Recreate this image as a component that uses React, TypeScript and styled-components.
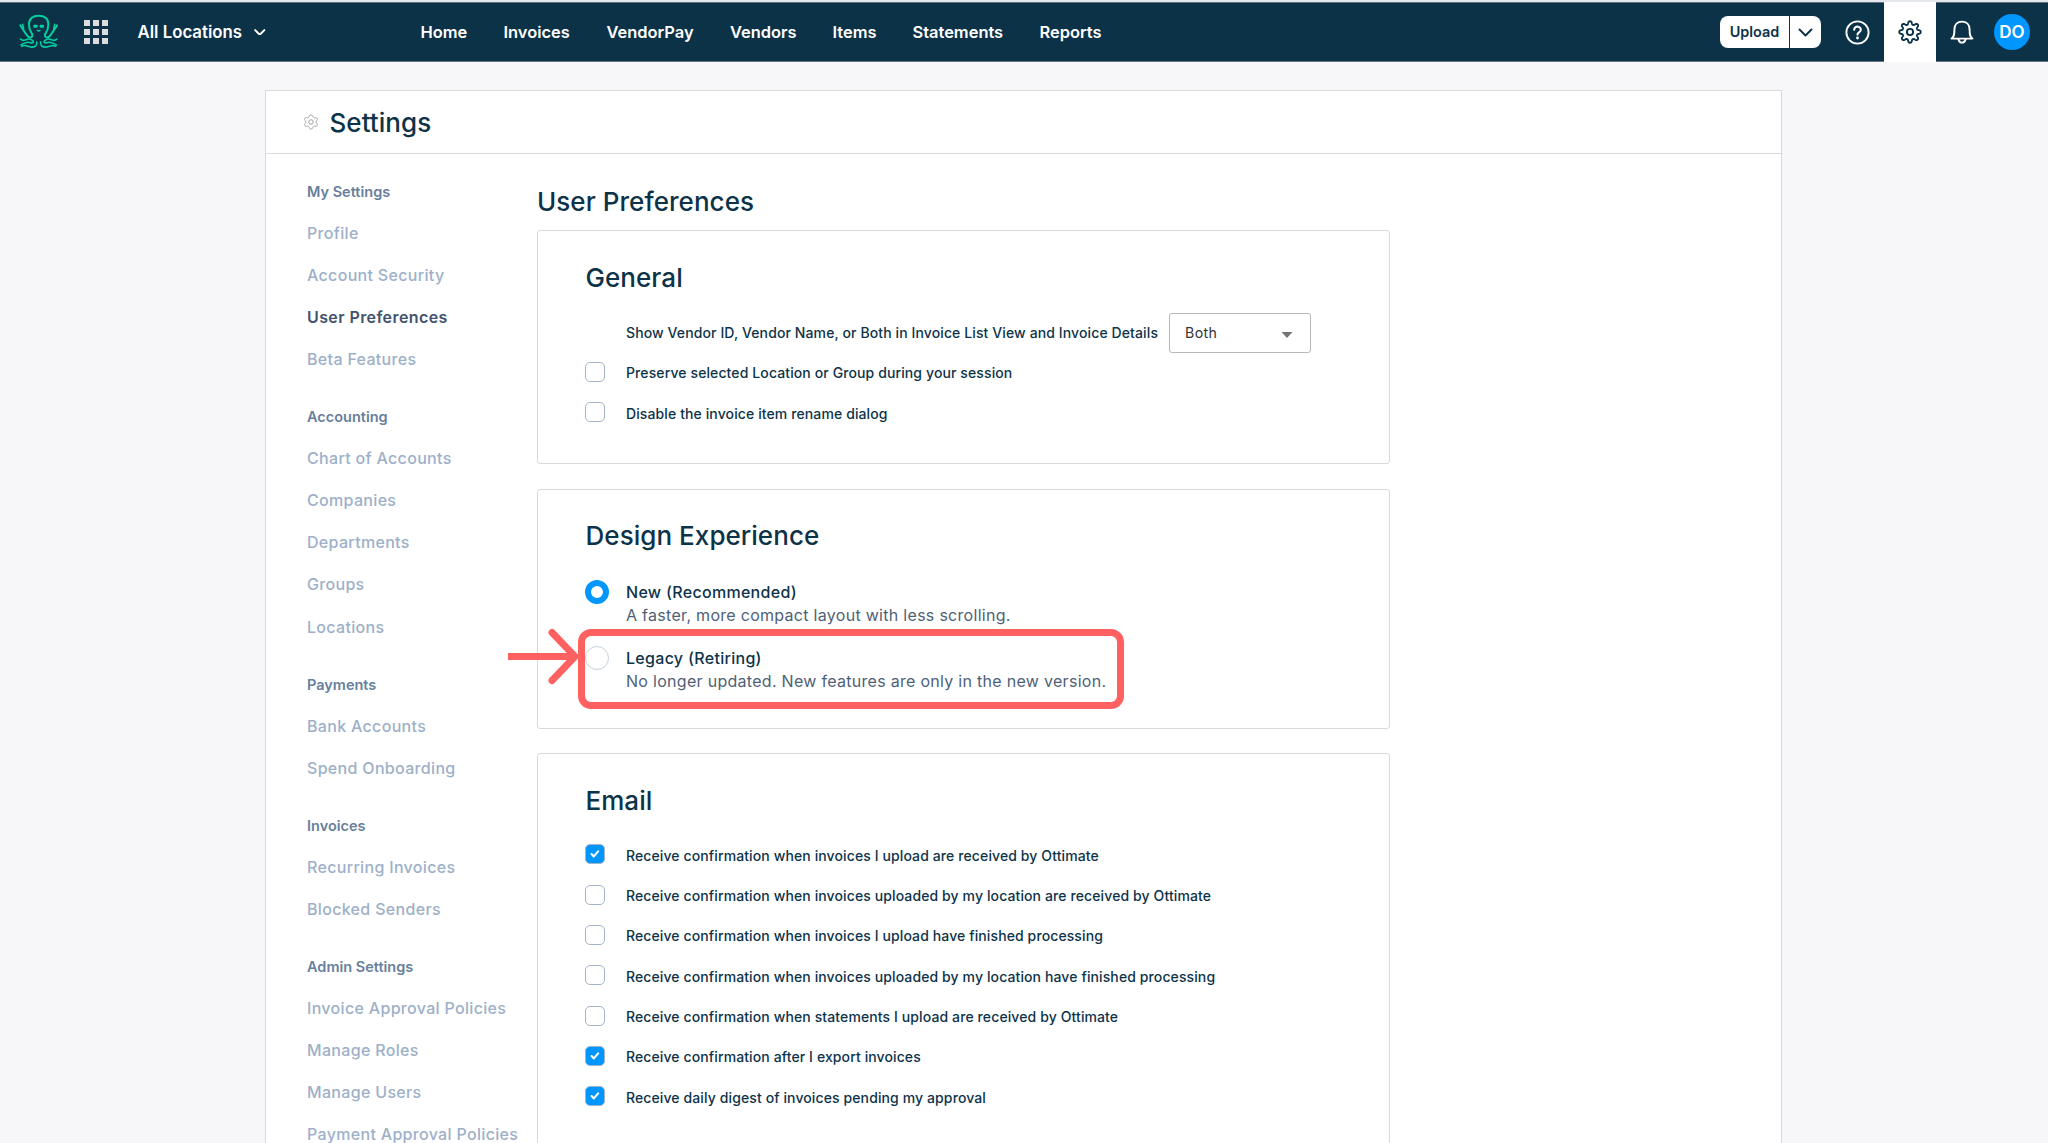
import React from "react";
import styled, { createGlobalStyle } from "styled-components";

const GlobalStyle = createGlobalStyle`
  * { box-sizing: border-box; }
  body {
    margin: 0;
    background: #f7f7fa;
    font-family: Inter, "Liberation Sans", sans-serif;
    color: #0d3349;
  }
`;

const Page = styled.div`
  height: 1143px;
  overflow: hidden;
  background: #f7f7fa;
  border-top: 2px solid #e4e8ec;
`;

const TopBar = styled.header`
  display: flex;
  height: 60px;
  background: #0c3248;
  border-top: 1px solid #5f7383;
  border-bottom: 1px solid #6a7387;
  color: #fff;
`;

const BarLeft = styled.div`
  display: flex;
  align-items: center;
  width: 420.5px;
  padding-left: 19px;
`;

const AppGrid = styled.div`
  display: grid;
  grid-template-columns: repeat(3, 6px);
  gap: 3px;
  margin: 0 29.5px 0 25px;
`;

const GridDot = styled.span`
  height: 6px;
  background: #dcdcdf;
`;

const LocationLabel = styled.span`
  font-size: 16.8px;
  font-weight: 600;
  margin-right: 12px;
`;

const Menu = styled.nav`
  display: flex;
  flex: 1;
  align-items: center;
  gap: 36px;
`;

const MenuLink = styled.a<{ $w: number }>`
  width: ${(p) => p.$w}px;
  font-size: 16.45px;
  font-weight: 600;
  white-space: nowrap;
`;

const BarRight = styled.div`
  display: flex;
  align-items: center;
`;

const UploadGroup = styled.div`
  display: flex;
  width: 101px;
  height: 32px;
  margin-right: 24px;
  border-radius: 8px;
  overflow: hidden;
  color: #0c3248;
`;

const UploadButton = styled.div`
  display: flex;
  align-items: center;
  justify-content: center;
  width: 69px;
  padding-bottom: 1px;
  background: #fff;
  font-size: 14.4px;
  font-weight: 600;
  margin-right: 1px;
`;

const UploadMore = styled.div`
  display: flex;
  flex: 1;
  align-items: center;
  justify-content: center;
  background: #fff;
`;

const SettingsTab = styled.div`
  display: flex;
  align-items: center;
  justify-content: center;
  width: 52px;
  height: 60px;
  margin: 0 14px 0 14px;
  background: #fff;
  color: #0c3248;
`;

const Avatar = styled.div`
  display: flex;
  align-items: center;
  justify-content: center;
  width: 36px;
  height: 36px;
  margin: 0 18px 0 20px;
  border-radius: 50%;
  background: #0096ff;
  font-size: 17px;
  font-weight: 600;
`;

const Panel = styled.section`
  width: 1517px;
  height: 1100px;
  margin: 28px 0 0 265px;
  background: #fff;
  border: 1px solid #d9dadc;
`;

const PanelHeader = styled.div`
  display: flex;
  align-items: center;
  gap: 11px;
  height: 63px;
  padding-left: 36.5px;
  border-bottom: 1px solid #d9dadc;
`;

const Heading = styled.h2<{ $shift?: number }>`
  margin: 0;
  padding-top: ${(p) => p.$shift ?? 0}px;
  font-size: 26px;
  font-weight: 500;
  line-height: 34px;
  letter-spacing: 0.05px;
`;

const PanelBody = styled.div`
  display: flex;
`;

const SideNav = styled.nav`
  width: 271px;
  padding: 19.1px 0 0 41px;
`;

const SideGroup = styled.div`
  margin-bottom: 18.3px;
`;

const SideTitle = styled.div`
  font-size: 14.5px;
  font-weight: 600;
  line-height: 38.6px;
  color: #67809b;
`;

const SideLink = styled.a<{ $active?: boolean }>`
  display: block;
  font-size: 16px;
  line-height: 42.12px;
  letter-spacing: ${(p) => (p.$active ? 0.4 : 0.32)}px;
  white-space: nowrap;
  font-weight: ${(p) => (p.$active ? 600 : 500)};
  color: ${(p) => (p.$active ? "#42526e" : "#9db0c8")};
`;

const Main = styled.main`
  width: 853px;
  padding-top: 30.5px;
`;

const Card = styled.div<{ $h: number; $top: number }>`
  height: ${(p) => p.$h}px;
  padding: ${(p) => p.$top}px 47px 0;
  margin-bottom: 24.5px;
  border: 1px solid #d9dadc;
  border-radius: 3px;

  ${Heading} {
    margin-left: 0.5px;
  }
`;

const TitleWrap = styled.div`
  margin-bottom: 11.5px;
`;

const PrefList = styled.div`
  margin-top: 17.4px;
`;

const PrefRow = styled.label`
  display: flex;
  align-items: center;
  height: 40.35px;
`;

const Box = styled.span<{ $on?: boolean; $hidden?: boolean }>`
  display: flex;
  align-items: center;
  justify-content: center;
  width: 20px;
  height: 20px;
  margin: 0 21px 2px 0;
  border: 1.5px solid #a3b5cb;
  border-radius: 5px;
  background: ${(p) => (p.$on ? "#0096ff" : "#fff")};
  visibility: ${(p) => (p.$hidden ? "hidden" : "visible")};
`;

const PrefText = styled.span`
  font-size: 14px;
  font-weight: 500;
  letter-spacing: 0.11px;
  white-space: nowrap;
`;

const Select = styled.div`
  display: flex;
  align-items: center;
  justify-content: space-between;
  width: 142px;
  height: 40px;
  margin-left: 11px;
  padding: 0 17px 0 15px;
  border: 1px solid #b9b9bb;
  border-radius: 3px;
  color: #333;
  font-size: 14.2px;
  letter-spacing: 0.3px;
`;

const Caret = styled.svg`
  margin-top: 4px;
`;

const RadioList = styled.div`
  display: flex;
  flex-direction: column;
  gap: 20px;
  margin-top: 28px;
`;

const RadioRow = styled.label`
  position: relative;
  display: flex;
  gap: 17px;
`;

const Radio = styled.span<{ $on?: boolean }>`
  width: 24px;
  height: 24px;
  margin-top: -1px;
  border-radius: 50%;
  background: #fff;
  border: ${(p) => (p.$on ? "6px solid #0096ff" : "1px solid #c6d2e0")};
`;

const RadioTitle = styled.div`
  font-size: 16px;
  font-weight: 500;
  line-height: 23px;
  letter-spacing: 0.3px;
`;

const RadioNote = styled.div`
  font-size: 16px;
  line-height: 23px;
  letter-spacing: 0.29px;
  color: #4f5f78;
  white-space: nowrap;
`;

const Highlight = styled.div`
  position: absolute;
  left: -7px;
  top: -17.5px;
  width: 546px;
  height: 80px;
  border: 7px solid #ff6161;
  border-radius: 13px;
`;

const Pointer = styled.svg`
  position: absolute;
  left: -77px;
  top: -18.5px;
`;

function Octopus() {
  return (
    <svg width="40" height="36" viewBox="17 18 118 108" fill="none" stroke="#04cf9e" strokeWidth="6" strokeLinecap="round" strokeLinejoin="round">
      <path d="M20 52 L37 78 Q46 92 54 87 Q59 82 53 74 Q46 64 46 49 C46 32 58 23 75 23 C92 23 104 32 104 49 Q104 64 97 74 Q91 82 96 87 Q104 92 113 78 L130 52" />
      <path d="M27 49 L30 62 M123 49 L120 62" strokeWidth="4.5" />
      <path d="M20 93 Q28 100 37 95 Q48 90 57 98 Q62 103 54 105 Q44 101 36 104 Q29 106 22 111" strokeWidth="4.8" />
      <path d="M130 93 Q122 100 113 95 Q102 90 93 98 Q88 103 96 105 Q106 101 114 104 Q121 106 128 111" strokeWidth="4.8" />
      <path d="M24 115 Q33 110 42 115 Q56 120 66 114 Q71 109 69 102" strokeWidth="4.8" />
      <path d="M126 115 Q117 110 108 115 Q94 120 84 114 Q79 109 81 102" strokeWidth="4.8" />
      <rect x="59" y="50" width="13" height="9" rx="3" fill="#04cf9e" stroke="none" />
      <rect x="78" y="50" width="13" height="9" rx="3" fill="#04cf9e" stroke="none" />
      <path d="M71 67 Q75 71 79 67" strokeWidth="4" />
    </svg>
  );
}

function gearPath(teeth: number, mid: number, amp: number, sharp: number, phase: number) {
  const pts: string[] = [];
  const n = 240;
  for (let i = 0; i < n; i++) {
    const a = (i / n) * Math.PI * 2;
    const wave = Math.tanh(sharp * Math.cos(teeth * (a - phase))) / Math.tanh(sharp);
    const r = mid + amp * wave;
    pts.push(`${(12 + r * Math.cos(a)).toFixed(2)} ${(12 + r * Math.sin(a)).toFixed(2)}`);
  }
  return `M${pts.join("L")}Z`;
}

function Gear() {
  return (
    <svg width="24" height="24" viewBox="0 0 24 24" fill="none" stroke="currentColor" strokeWidth="1.9" strokeLinejoin="round">
      <path d={gearPath(8, 9.2, 1.5, 1.5, 0)} />
      <circle cx="12" cy="12" r="3.1" />
    </svg>
  );
}

function SmallGear() {
  return (
    <svg width="16" height="16" viewBox="0 0 24 24" fill="none" stroke="#94989c" strokeWidth="1.4">
      <path d={gearPath(6, 9.2, 1.3, 2, Math.PI / 6)} />
      <circle cx="12" cy="12" r="3.4" />
    </svg>
  );
}

function Help() {
  return (
    <svg width="25" height="25" viewBox="0 0 25 25" fill="none" stroke="#fff" strokeWidth="1.9" strokeLinecap="round">
      <circle cx="12.5" cy="12.5" r="11.1" />
      <path d="M9.2 9.8a3.3 3 0 1 1 5.3 2.2c-1.2.9-2 1.2-2 2.6" strokeWidth="2.1" />
      <circle cx="12.5" cy="18" r="1.4" fill="#fff" stroke="none" />
    </svg>
  );
}

function Bell() {
  return (
    <svg width="24" height="24" viewBox="0 0 24 24" fill="none" stroke="#fff" strokeWidth="1.9" strokeLinecap="round" strokeLinejoin="round">
      <path d="M1.5 18.6C4.2 17 4.4 14.5 4.4 9.4C4.4 4.6 7.6 1.6 12 1.6C16.4 1.6 19.6 4.6 19.6 9.4C19.6 14.5 19.8 17 22.5 18.6Z" />
      <path d="M8.4 19.4Q9.4 22.6 12 22.6Q14.6 22.6 15.6 19.4" />
    </svg>
  );
}

function Chevron({ w, s }: { w: number; s: number }) {
  return (
    <svg width={w} height={w * 0.6} viewBox="0 0 15 9" fill="none" stroke="currentColor" strokeWidth={s} strokeLinecap="round" strokeLinejoin="round">
      <path d="M1.5 1.5 L7.5 7.5 L13.5 1.5" />
    </svg>
  );
}

const menu: [string, number][] = [
  ["Home", 47],
  ["Invoices", 67],
  ["VendorPay", 87.5],
  ["Vendors", 66.5],
  ["Items", 44],
  ["Statements", 91],
  ["Reports", 63],
];

const groups: [string, string[]][] = [
  ["My Settings", ["Profile", "Account Security", "User Preferences", "Beta Features"]],
  ["Accounting", ["Chart of Accounts", "Companies", "Departments", "Groups", "Locations"]],
  ["Payments", ["Bank Accounts", "Spend Onboarding"]],
  ["Invoices", ["Recurring Invoices", "Blocked Senders"]],
  ["Admin Settings", ["Invoice Approval Policies", "Manage Roles", "Manage Users", "Payment Approval Policies"]],
];

const emailPrefs: [string, boolean][] = [
  ["Receive confirmation when invoices I upload are received by Ottimate", true],
  ["Receive confirmation when invoices uploaded by my location are received by Ottimate", false],
  ["Receive confirmation when invoices I upload have finished processing", false],
  ["Receive confirmation when invoices uploaded by my location have finished processing", false],
  ["Receive confirmation when statements I upload are received by Ottimate", false],
  ["Receive confirmation after I export invoices", true],
  ["Receive daily digest of invoices pending my approval", true],
];

function Preference({ text, on }: { text: string; on?: boolean }) {
  return (
    <PrefRow>
      <Box $on={on}>
        {on && (
          <svg width="10" height="8" viewBox="0 0 11 9" fill="none" stroke="#fff" strokeWidth="2.4" strokeLinecap="round" strokeLinejoin="round">
            <path d="M1.6 4.6 L4.2 7.2 L9 1.6" />
          </svg>
        )}
      </Box>
      <PrefText>{text}</PrefText>
    </PrefRow>
  );
}

export default function App() {
  return (
    <Page>
      <GlobalStyle />
      <TopBar>
        <BarLeft>
          <Octopus />
          <AppGrid>
            {Array.from({ length: 9 }, (_, i) => (
              <GridDot key={i} />
            ))}
          </AppGrid>
          <LocationLabel>All Locations</LocationLabel>
          <Chevron w={11.5} s={2.6} />
        </BarLeft>
        <Menu>
          {menu.map(([label, w]) => (
            <MenuLink key={label} $w={w}>
              {label}
            </MenuLink>
          ))}
        </Menu>
        <BarRight>
          <UploadGroup>
            <UploadButton>Upload</UploadButton>
            <UploadMore>
              <Chevron w={15} s={1.9} />
            </UploadMore>
          </UploadGroup>
          <Help />
          <SettingsTab>
            <Gear />
          </SettingsTab>
          <Bell />
          <Avatar>DO</Avatar>
        </BarRight>
      </TopBar>
      <Panel>
        <PanelHeader>
          <SmallGear />
          <Heading $shift={1}>Settings</Heading>
        </PanelHeader>
        <PanelBody>
          <SideNav>
            {groups.map(([title, items]) => (
              <SideGroup key={title}>
                <SideTitle>{title}</SideTitle>
                {items.map((item) => (
                  <SideLink key={item} $active={item === "User Preferences"}>
                    {item}
                  </SideLink>
                ))}
              </SideGroup>
            ))}
          </SideNav>
          <Main>
            <TitleWrap>
              <Heading>User Preferences</Heading>
            </TitleWrap>
            <Card $h={234} $top={30}>
              <Heading>General</Heading>
              <PrefList>
                <PrefRow>
                  <Box $hidden />
                  <PrefText>Show Vendor ID, Vendor Name, or Both in Invoice List View and Invoice Details</PrefText>
                  <Select>
                    Both
                    <Caret width="12" height="6" viewBox="0 0 12 6">
                      <path d="M0.5 0 H11.5 L6 6 Z" fill="#757575" />
                    </Caret>
                  </Select>
                </PrefRow>
                <Preference text="Preserve selected Location or Group during your session" />
                <Preference text="Disable the invoice item rename dialog" />
              </PrefList>
            </Card>
            <Card $h={240} $top={29.4}>
              <Heading>Design Experience</Heading>
              <RadioList>
                <RadioRow>
                  <Radio $on />
                  <div>
                    <RadioTitle>New (Recommended)</RadioTitle>
                    <RadioNote>A faster, more compact layout with less scrolling.</RadioNote>
                  </div>
                </RadioRow>
                <RadioRow>
                  <Radio />
                  <div>
                    <RadioTitle>Legacy (Retiring)</RadioTitle>
                    <RadioNote>No longer updated. New features are only in the new version.</RadioNote>
                  </div>
                  <Highlight />
                  <Pointer width="76" height="60" viewBox="0 0 76 60" fill="none" stroke="#ff6161" strokeWidth="7">
                    <path d="M0 28.5 H66" />
                    <path d="M44 4.5 L67 28.5 L44 52.5" strokeLinecap="round" />
                  </Pointer>
                </RadioRow>
              </RadioList>
            </Card>
            <Card $h={420} $top={29.7}>
              <Heading>Email</Heading>
              <PrefList>
                {emailPrefs.map(([text, on]) => (
                  <Preference key={text} text={text} on={on} />
                ))}
              </PrefList>
            </Card>
          </Main>
        </PanelBody>
      </Panel>
    </Page>
  );
}
